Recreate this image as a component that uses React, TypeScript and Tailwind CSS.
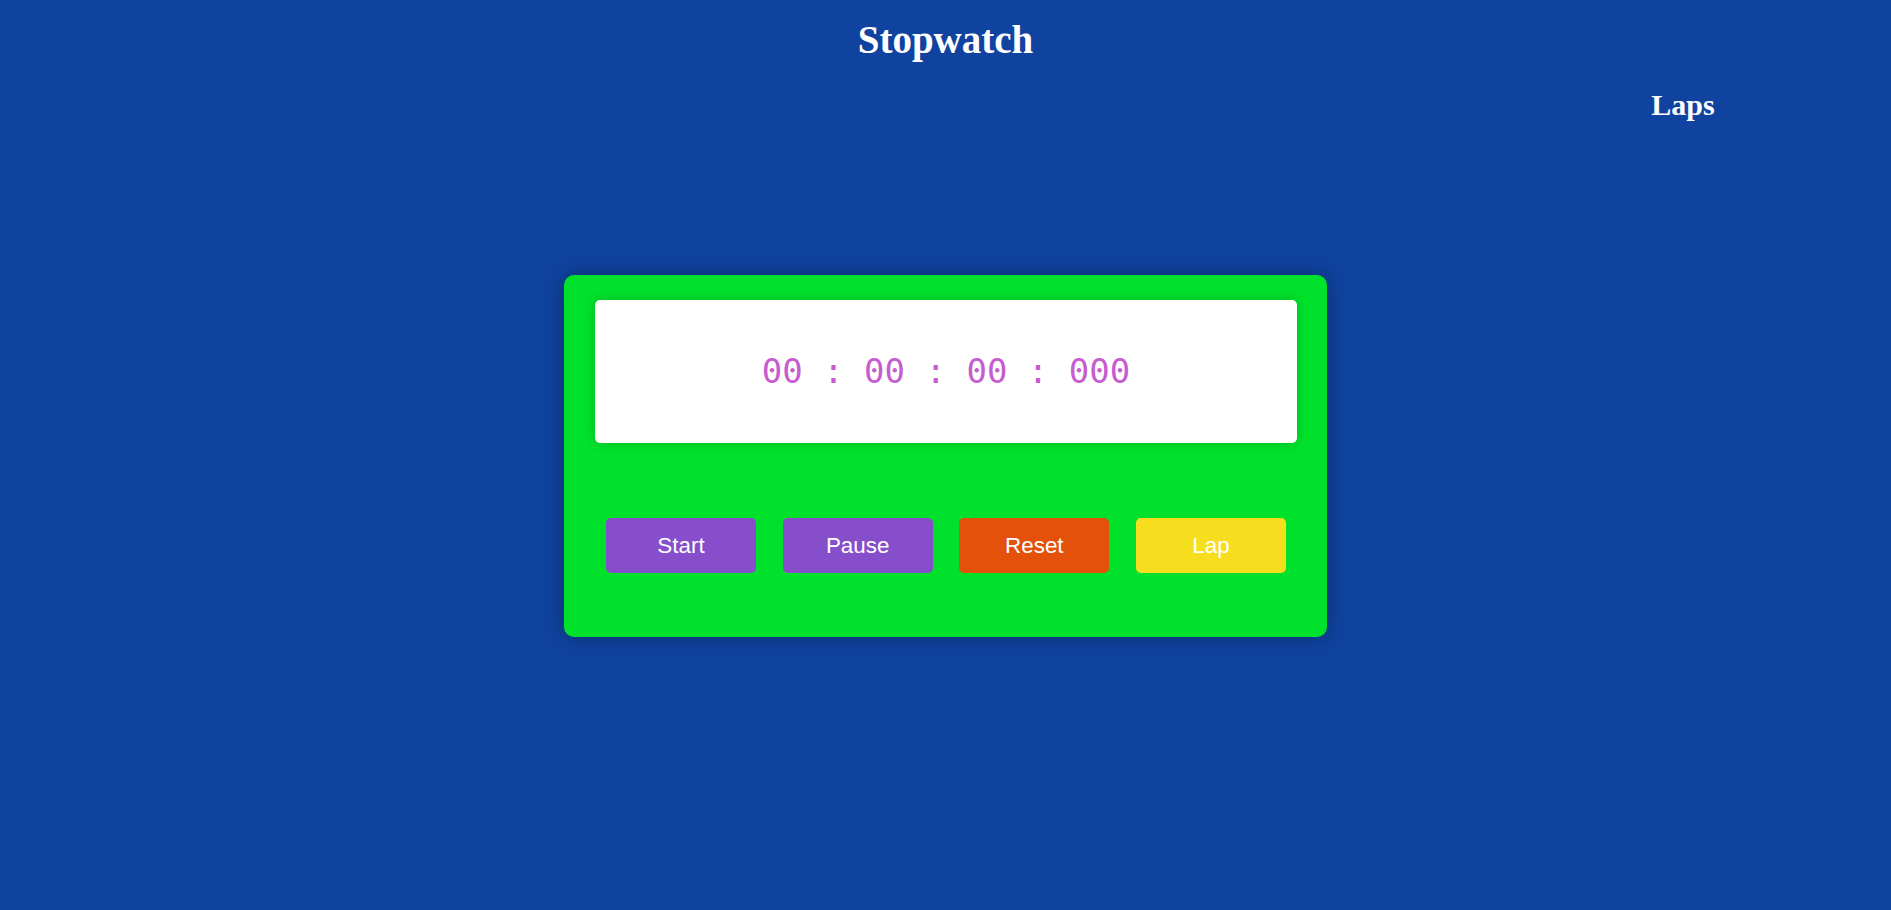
import React, { useEffect, useRef, useState } from 'react';

const pad = (n: number, size = 2) => String(n).padStart(size, '0');

const App: React.FC = () => {
  const [elapsed, setElapsed] = useState(0);
  const [running, setRunning] = useState(false);
  const [laps, setLaps] = useState<number[]>([]);
  const startRef = useRef(0);

  useEffect(() => {
    if (!running) return;
    startRef.current = Date.now() - elapsed;
    const id = setInterval(() => setElapsed(Date.now() - startRef.current), 10);
    return () => clearInterval(id);
    // eslint-disable-next-line react-hooks/exhaustive-deps
  }, [running]);

  const format = (ms: number) => {
    const h = Math.floor(ms / 3600000);
    const m = Math.floor((ms % 3600000) / 60000);
    const s = Math.floor((ms % 60000) / 1000);
    return `${pad(h)} : ${pad(m)} : ${pad(s)} : ${pad(ms % 1000, 3)}`;
  };

  const buttons = [
    { label: 'Start', cls: 'bg-[#874ecb]', onClick: () => setRunning(true) },
    { label: 'Pause', cls: 'bg-[#874ecb]', onClick: () => setRunning(false) },
    {
      label: 'Reset',
      cls: 'bg-[#e3510a]',
      onClick: () => {
        setRunning(false);
        setElapsed(0);
        setLaps([]);
      },
    },
    { label: 'Lap', cls: 'bg-[#f6de1f]', onClick: () => setLaps((l) => [...l, elapsed]) },
  ];

  return (
    <div className="min-h-screen w-full bg-[#1043a0] font-['Liberation_Serif',serif] text-white">
      {/* Title */}
      <h1 className="pt-[17px] text-center text-[39px] font-bold leading-[45px]">Stopwatch</h1>

      {/* Laps column */}
      <div className="mt-[25px] flex justify-end">
        <div className="w-[416px] text-center">
          <h2 className="text-[30px] font-bold leading-[36px]">Laps</h2>
          {laps.map((lap, i) => (
            <p key={i} className="font-['Liberation_Mono',monospace] text-base">
              {format(lap)}
            </p>
          ))}
        </div>
      </div>

      {/* Stopwatch card */}
      <div className="mx-auto mt-[152px] w-[763px] rounded-[10px] bg-[#00e12b] pb-[64px] pl-[31px] pr-[30px] pt-[25px] shadow-[0_0_22px_rgba(0,0,0,0.35)]">
        <div className="flex h-[143px] items-center justify-center rounded-[5px] bg-white shadow-[0_0_12px_rgba(0,0,0,0.18)]">
          <span className="font-['DejaVu_Sans_Mono',monospace] text-[34px] text-[#c65ccf]">
            {format(elapsed)}
          </span>
        </div>

        <div className="mt-[75px] flex justify-between px-[11px]">
          {buttons.map((b) => (
            <button
              key={b.label}
              onClick={b.onClick}
              className={`h-[55px] w-[150px] rounded-[5px] font-['Liberation_Sans',Arial,sans-serif] text-[22.4px] text-white ${b.cls}`}
            >
              {b.label}
            </button>
          ))}
        </div>
      </div>
    </div>
  );
};

export default App;
